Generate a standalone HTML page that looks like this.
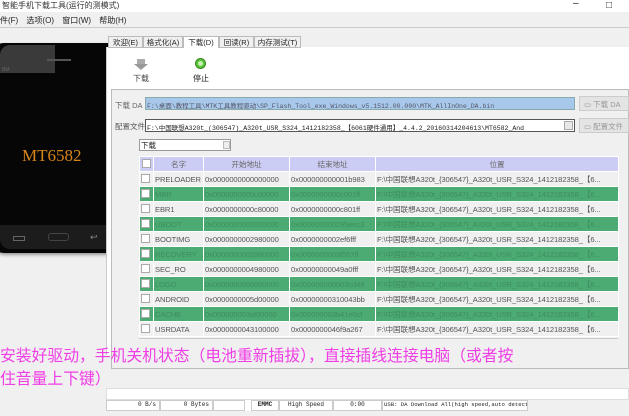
<!DOCTYPE html>
<html><head><meta charset="utf-8"><style>
*{margin:0;padding:0;box-sizing:border-box}
body{width:629px;height:416px;overflow:hidden;background:#f0f0f0;position:relative;font-family:"Liberation Sans","Noto Sans CJK SC",sans-serif;font-size:9px;color:#222}
.a{position:absolute}
.mono{font-family:"Liberation Mono","Noto Sans CJK SC",monospace}
table{border-collapse:collapse;table-layout:fixed}
td{height:15px;border:1px solid #fff;padding:0 1px;white-space:nowrap;overflow:hidden;font-size:7.6px;color:#555;letter-spacing:-0.1px}
tr.g td{background:#4caa73;color:#3e8f5e}
tr.w td{background:#f0f0f0}
tr.h td{background:#cccdf4;color:#666;text-align:center}
.cb{display:inline-block;width:9px;height:9px;border:1px solid #aaa;background:#fff}
</style></head><body>
<div class="a" style="left:0;top:0;width:629px;height:12px;background:#fff"></div>
<div class="a" style="left:2px;top:0;font-size:8px;color:#333">智能手机下载工具(运行的测模式)</div>
<div class="a" style="left:606px;top:0;font-size:10px">□</div>
<div class="a" style="left:573px;top:-2px;font-size:10px">–</div>
<div class="a" style="left:0;top:15px;font-size:8px;word-spacing:6px">件(F) 选项(O) 窗口(W) 帮助(H)</div>
<div class="a" style="left:0;top:27px;width:629px;height:1px;background:#ccc"></div>
<!-- phone -->
<div class="a" style="left:-10px;top:43px;width:131px;height:210px;background:#060606;border-radius:14px;box-shadow:1px 2px 3px #999"></div>
<div class="a" style="left:0;top:45px;width:55px;height:28px;background:#3a3a3a;border-top-left-radius:10px"></div>
<div class="a" style="left:47px;top:59px;width:24px;height:2px;background:#555"></div>
<div class="a" style="left:2px;top:67px;font-size:5px;color:#666">BM</div>
<div class="a" style="left:0;top:225px;width:115px;height:24px;background:#1c1c1c;border-bottom-left-radius:10px"></div>
<div class="a" style="left:22px;top:146px;font-family:'Liberation Serif',serif;font-size:17px;color:#d8851c">MT6582</div>
<div class="a" style="left:48px;top:233px;width:21px;height:8px;border:1px solid #444;border-radius:3px"></div>
<div class="a" style="left:13px;top:236px;width:12px;height:5px;border:1px solid #666"></div>
<div class="a" style="left:90px;top:232px;font-size:9px;color:#888">↩</div>
<!-- tabs -->
<div class="a" style="left:106px;top:47px;width:523px;height:308px;background:#fff;border-left:1px solid #ccc"></div>
<div class="a" style="left:108px;top:36px;height:12px;display:flex;font-size:7.5px">
<div style="width:35px;border:1px solid #bbb;background:#f0f0f0;text-align:center">欢迎(E)</div>
<div style="width:40px;border:1px solid #bbb;background:#f0f0f0;text-align:center">格式化(A)</div>
<div style="width:36px;border:1px solid #bbb;border-bottom:none;background:#fff;text-align:center">下载(D)</div>
<div style="width:35px;border:1px solid #bbb;background:#f0f0f0;text-align:center">回读(R)</div>
<div style="width:47px;border:1px solid #bbb;background:#f0f0f0;text-align:center">内存测试(T)</div>
</div>
<!-- toolbar -->
<div class="a" style="left:137px;top:59px;width:8px;height:6px;background:#aaa"></div>
<div class="a" style="left:134px;top:64px;width:0;height:0;border-left:7px solid transparent;border-right:7px solid transparent;border-top:6px solid #999"></div>
<div class="a" style="left:133px;top:73px;font-size:8px;color:#444">下载</div>
<div class="a" style="left:195px;top:58px;width:11px;height:11px;border-radius:50%;background:#57c23a;border:1px solid #3a8a20"></div>
<div class="a" style="left:198px;top:61px;width:5px;height:5px;border-radius:50%;background:#c8f0b0"></div>
<div class="a" style="left:193px;top:73px;font-size:8px;color:#222">停止</div>
<!-- group -->
<div class="a" style="left:111px;top:89px;width:518px;height:280px;border:1px solid #bbb;background:#f0f0f0"></div>
<div class="a" style="left:115px;top:100px;font-size:7.5px;color:#666">下载 DA</div>
<div class="a mono" style="left:145px;top:97px;width:430px;height:13px;background:#a7c8ea;border:1px solid #8aa;font-size:6.5px;color:#556;padding:2px 1px;white-space:nowrap;overflow:hidden">F:\桌面\教程工具\MTK工具教程驱动\SP_Flash_Tool_exe_Windows_v5.1512.00.000\MTK_AllInOne_DA.bin</div>
<div class="a" style="left:579px;top:96px;width:50px;height:15px;background:#e4e4e4;border:1px solid #ccc;font-size:7.5px;color:#999;padding:2px 0 0 4px">▭ 下载 DA</div>
<div class="a" style="left:115px;top:121px;font-size:7.5px;color:#555">配置文件</div>
<div class="a mono" style="left:145px;top:119px;width:430px;height:13px;background:#fff;border:1px solid #555;font-size:6.5px;color:#222;padding:2px 1px;white-space:nowrap;overflow:hidden">F:\中国联想A320t_(306547)_A320t_USR_S324_1412182358_【6061硬件通用】_4.4.2_20160314204613\MT6582_And</div>
<div class="a" style="left:564px;top:121px;width:9px;height:9px;background:#e8e8e8;border:1px solid #aaa"></div>
<div class="a" style="left:579px;top:118px;width:50px;height:15px;background:#e4e4e4;border:1px solid #ccc;font-size:7.5px;color:#999;padding:2px 0 0 4px">▭ 配置文件</div>
<div class="a" style="left:139px;top:139px;width:92px;height:12px;background:#fff;border:1px solid #999;font-size:7.5px;padding-left:1px">下载</div>
<div class="a" style="left:223px;top:141px;width:7px;height:8px;background:#eee;border:1px solid #bbb"></div>
<!-- table -->
<table class="a" style="left:139px;top:156px;width:479px">
<colgroup><col style="width:14px"><col style="width:50px"><col style="width:86px"><col style="width:86px"><col style="width:243px"></colgroup>
<tr class="h"><td><span class="cb"></span></td><td>名字</td><td>开始地址</td><td>结束地址</td><td>位置</td></tr>
<tr class="w"><td><span class="cb"></span></td><td>PRELOADER</td><td>0x0000000000000000</td><td>0x000000000001b983</td><td>F:\中国联想A320t_{306547}_A320t_USR_S324_1412182358_【6...</td></tr>
<tr class="g"><td><span class="cb"></span></td><td>MBR</td><td>0x0000000000c00000</td><td>0x0000000000c001ff</td><td>F:\中国联想A320t_{306547}_A320t_USR_S324_1412182358_【6...</td></tr>
<tr class="w"><td><span class="cb"></span></td><td>EBR1</td><td>0x0000000000c80000</td><td>0x0000000000c801ff</td><td>F:\中国联想A320t_{306547}_A320t_USR_S324_1412182358_【6...</td></tr>
<tr class="g"><td><span class="cb"></span></td><td>UBOOT</td><td>0x0000000002920000</td><td>0x000000000295eec3</td><td>F:\中国联想A320t_{306547}_A320t_USR_S324_1412182358_【6...</td></tr>
<tr class="w"><td><span class="cb"></span></td><td>BOOTIMG</td><td>0x0000000002980000</td><td>0x0000000002ef6fff</td><td>F:\中国联想A320t_{306547}_A320t_USR_S324_1412182358_【6...</td></tr>
<tr class="g"><td><span class="cb"></span></td><td>RECOVERY</td><td>0x0000000003980000</td><td>0x0000000003f557ff</td><td>F:\中国联想A320t_{306547}_A320t_USR_S324_1412182358_【6...</td></tr>
<tr class="w"><td><span class="cb"></span></td><td>SEC_RO</td><td>0x0000000004980000</td><td>0x00000000049a0fff</td><td>F:\中国联想A320t_{306547}_A320t_USR_S324_1412182358_【6...</td></tr>
<tr class="g"><td><span class="cb"></span></td><td>LOGO</td><td>0x0000000005000000</td><td>0x000000000503cd49</td><td>F:\中国联想A320t_{306547}_A320t_USR_S324_1412182358_【6...</td></tr>
<tr class="w"><td><span class="cb"></span></td><td>ANDROID</td><td>0x0000000005d00000</td><td>0x00000000310043bb</td><td>F:\中国联想A320t_{306547}_A320t_USR_S324_1412182358_【6...</td></tr>
<tr class="g"><td><span class="cb"></span></td><td>CACHE</td><td>0x000000003af00000</td><td>0x000000003b41e0cf</td><td>F:\中国联想A320t_{306547}_A320t_USR_S324_1412182358_【6...</td></tr>
<tr class="w"><td><span class="cb"></span></td><td>USRDATA</td><td>0x0000000043100000</td><td>0x0000000046f9a267</td><td>F:\中国联想A320t_{306547}_A320t_USR_S324_1412182358_【6...</td></tr>
</table>
<div class="a" style="left:139px;top:338px;width:479px;height:30px;background:#f0f0f0;border-top:1px solid #ccc"></div>
<!-- pink text -->
<div class="a" style="left:0;top:343px;white-space:nowrap;font-family:'Noto Sans CJK SC',sans-serif;font-size:15.8px;line-height:23px;color:#f03ee6">安装好驱动，手机关机状态（电池重新插拔），直接插线连接电脑（或者按<br>住音量上下键）</div>
<!-- status -->
<div class="a" style="left:106px;top:388px;width:523px;height:12px;background:#fff;border:1px solid #ddd"></div>
<div class="a mono" style="left:106px;top:400px;height:11px;display:flex;font-size:6px;background:#fff">
<div style="width:54px;border:1px solid #ccc;text-align:right;padding-right:3px">0 B/s</div>
<div style="width:53px;border:1px solid #ccc;text-align:right;padding-right:3px">0 Bytes</div>
<div style="width:32px;border:1px solid #ccc"></div>
<div style="width:6px"></div>
<div style="width:28px;border:1px solid #ccc;text-align:center;font-weight:bold">EMMC</div>
<div style="width:54px;border:1px solid #ccc;text-align:center">High Speed</div>
<div style="width:49px;border:1px solid #ccc;text-align:center">0:00</div>
<div style="width:146px;border:1px solid #ccc;padding-left:1px;white-space:nowrap;overflow:hidden;font-size:5.6px">USB: DA Download All(high speed,auto detect)</div>
</div>
</body></html>
